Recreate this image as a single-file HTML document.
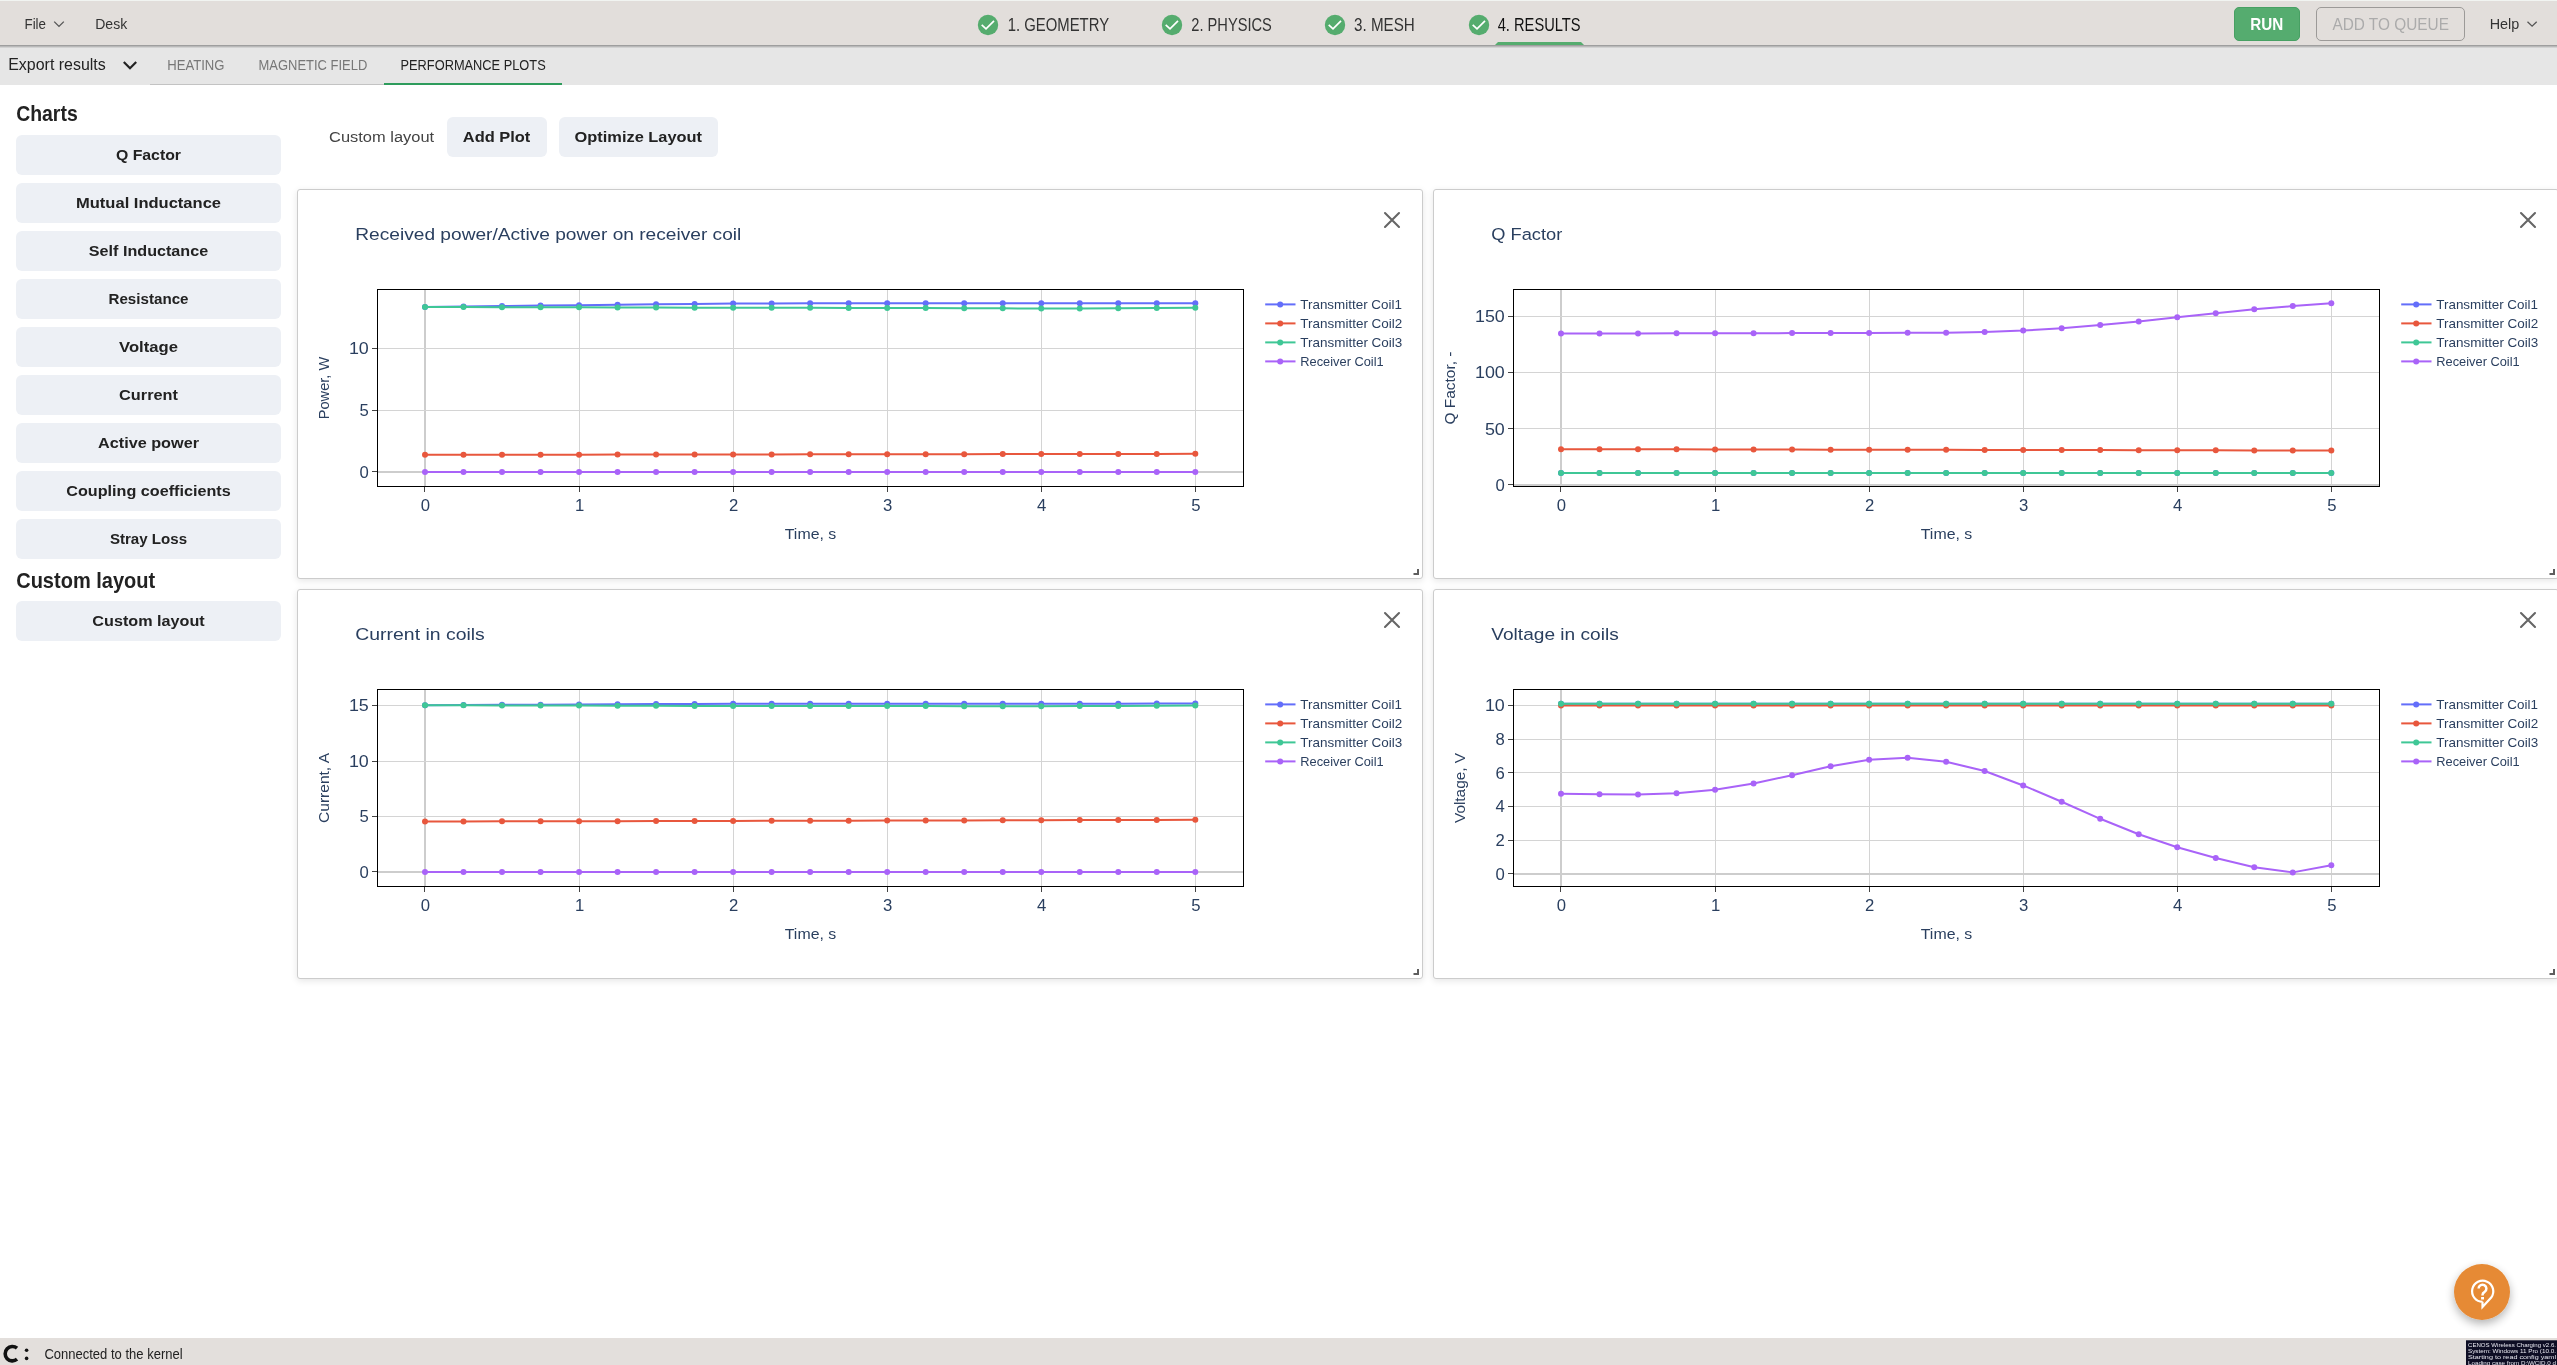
<!DOCTYPE html>
<html><head><meta charset="utf-8"><title>CENOS</title>
<style>
html,body{margin:0;padding:0;width:2557px;height:1365px;overflow:hidden;background:#fff;font-family:"Liberation Sans", sans-serif;}
svg text{font-family:"Liberation Sans", sans-serif;}
svg{will-change:transform;}
</style></head><body>
<div style="position:absolute;left:297px;top:189px;width:1124px;height:388px;border:1px solid #CCCCCC;border-radius:3px;background:#fff;box-shadow:0 2px 7px rgba(0,0,0,0.1)"></div><div style="position:absolute;left:1433px;top:189px;width:1124px;height:388px;border:1px solid #CCCCCC;border-radius:3px;background:#fff;box-shadow:0 2px 7px rgba(0,0,0,0.1)"></div><div style="position:absolute;left:297px;top:589px;width:1124px;height:388px;border:1px solid #CCCCCC;border-radius:3px;background:#fff;box-shadow:0 2px 7px rgba(0,0,0,0.1)"></div><div style="position:absolute;left:1433px;top:589px;width:1124px;height:388px;border:1px solid #CCCCCC;border-radius:3px;background:#fff;box-shadow:0 2px 7px rgba(0,0,0,0.1)"></div>
<svg width="2557" height="1365" viewBox="0 0 2557 1365" style="position:absolute;left:0;top:0;font-family:'Liberation Sans', sans-serif"><defs><filter id="fabsh" x="-50%" y="-50%" width="200%" height="200%"><feGaussianBlur in="SourceAlpha" stdDeviation="5"/><feOffset dy="4"/><feComponentTransfer><feFuncA type="linear" slope="0.3"/></feComponentTransfer><feMerge><feMergeNode/><feMergeNode in="SourceGraphic"/></feMerge></filter></defs><rect x="0" y="0" width="2557" height="45" fill="#E2DEDB"/><rect x="0" y="0" width="2557" height="1" fill="#F1F4F1"/><rect x="0" y="45" width="2557" height="1" fill="#9E9E9E"/><rect x="0" y="46" width="2557" height="1" fill="#B9B9B9"/><rect x="0" y="47" width="2557" height="1" fill="#D2D2D2"/><rect x="0" y="48" width="2557" height="37" fill="#E6E6E6"/><text x="24.50" y="29.30" font-size="15.00" fill="#333" font-weight="normal" text-anchor="start" textLength="21.5" lengthAdjust="spacingAndGlyphs" >File</text><polyline points="54.2,21.6 59,26.4 63.8,21.6" fill="none" stroke="#555" stroke-width="1.3"/><text x="95.20" y="29.30" font-size="15.00" fill="#333" font-weight="normal" text-anchor="start" textLength="32.0" lengthAdjust="spacingAndGlyphs" >Desk</text><circle cx="988.0" cy="25" r="10.2" fill="#55AC6E"/><polyline points="981.7,24.8 986.0,28.8 994.0,20.8" fill="none" stroke="#fff" stroke-width="1.7"/><text x="1007.70" y="31.00" font-size="17.70" fill="#333" font-weight="normal" text-anchor="start" textLength="101.4" lengthAdjust="spacingAndGlyphs" >1. GEOMETRY</text><circle cx="1172.0" cy="25" r="10.2" fill="#55AC6E"/><polyline points="1165.7,24.8 1170.0,28.8 1178.0,20.8" fill="none" stroke="#fff" stroke-width="1.7"/><text x="1191.30" y="31.00" font-size="17.70" fill="#333" font-weight="normal" text-anchor="start" textLength="80.6" lengthAdjust="spacingAndGlyphs" >2. PHYSICS</text><circle cx="1335.0" cy="25" r="10.2" fill="#55AC6E"/><polyline points="1328.7,24.8 1333.0,28.8 1341.0,20.8" fill="none" stroke="#fff" stroke-width="1.7"/><text x="1354.00" y="31.00" font-size="17.70" fill="#333" font-weight="normal" text-anchor="start" textLength="60.8" lengthAdjust="spacingAndGlyphs" >3. MESH</text><circle cx="1479.0" cy="25" r="10.2" fill="#55AC6E"/><polyline points="1472.7,24.8 1477.0,28.8 1485.0,20.8" fill="none" stroke="#fff" stroke-width="1.7"/><text x="1497.70" y="31.00" font-size="17.70" fill="#111" font-weight="normal" text-anchor="start" textLength="82.9" lengthAdjust="spacingAndGlyphs" >4. RESULTS</text><path d="M1495,45 L1498,42 L1581,42 L1584,45 Z" fill="#55AC6E"/><rect x="2234.5" y="7.5" width="65" height="33" rx="4.5" fill="#55AC6F" stroke="#47A063" stroke-width="1"/><text x="2250.30" y="30.00" font-size="17.30" fill="#fff" font-weight="600" text-anchor="start" textLength="33.0" lengthAdjust="spacingAndGlyphs" >RUN</text><rect x="2316.5" y="7.5" width="148" height="33" rx="4.5" fill="none" stroke="#9C9A98" stroke-width="1"/><text x="2332.40" y="30.00" font-size="17.30" fill="#ABABAB" font-weight="normal" text-anchor="start" textLength="116.5" lengthAdjust="spacingAndGlyphs" >ADD TO QUEUE</text><text x="2489.70" y="28.70" font-size="15.00" fill="#333" font-weight="normal" text-anchor="start" textLength="29.6" lengthAdjust="spacingAndGlyphs" >Help</text><polyline points="2527.5,21.8 2532.1,26.2 2536.7,21.8" fill="none" stroke="#555" stroke-width="1.3"/><text x="8.20" y="70.00" font-size="16.60" fill="#222" font-weight="normal" text-anchor="start" textLength="97.6" lengthAdjust="spacingAndGlyphs" >Export results</text><polyline points="123.8,62 130,68.2 136.2,62" fill="none" stroke="#222" stroke-width="2.2"/><text x="167.20" y="70.20" font-size="15.10" fill="#777" font-weight="normal" text-anchor="start" textLength="57.3" lengthAdjust="spacingAndGlyphs" >HEATING</text><text x="258.50" y="70.20" font-size="15.10" fill="#777" font-weight="normal" text-anchor="start" textLength="108.8" lengthAdjust="spacingAndGlyphs" >MAGNETIC FIELD</text><text x="400.50" y="70.20" font-size="15.10" fill="#222" font-weight="normal" text-anchor="start" textLength="145.2" lengthAdjust="spacingAndGlyphs" >PERFORMANCE PLOTS</text><rect x="150" y="84" width="234" height="1" fill="#C3C3C3"/><rect x="384" y="83" width="178" height="2" fill="#2E9C5C"/><text x="16.20" y="121.00" font-size="22.70" fill="#222" font-weight="bold" text-anchor="start" textLength="61.5" lengthAdjust="spacingAndGlyphs" >Charts</text><rect x="16" y="135" width="265" height="40" rx="6" fill="#EDF0F5"/><text x="148.50" y="159.90" font-size="15.30" fill="#222" font-weight="bold" text-anchor="middle" textLength="65.1" lengthAdjust="spacingAndGlyphs" >Q Factor</text><rect x="16" y="183" width="265" height="40" rx="6" fill="#EDF0F5"/><text x="148.50" y="207.90" font-size="15.30" fill="#222" font-weight="bold" text-anchor="middle" textLength="145.0" lengthAdjust="spacingAndGlyphs" >Mutual Inductance</text><rect x="16" y="231" width="265" height="40" rx="6" fill="#EDF0F5"/><text x="148.50" y="255.90" font-size="15.30" fill="#222" font-weight="bold" text-anchor="middle" textLength="119.3" lengthAdjust="spacingAndGlyphs" >Self Inductance</text><rect x="16" y="279" width="265" height="40" rx="6" fill="#EDF0F5"/><text x="148.50" y="303.90" font-size="15.30" fill="#222" font-weight="bold" text-anchor="middle" textLength="80.0" lengthAdjust="spacingAndGlyphs" >Resistance</text><rect x="16" y="327" width="265" height="40" rx="6" fill="#EDF0F5"/><text x="148.50" y="351.90" font-size="15.30" fill="#222" font-weight="bold" text-anchor="middle" textLength="58.8" lengthAdjust="spacingAndGlyphs" >Voltage</text><rect x="16" y="375" width="265" height="40" rx="6" fill="#EDF0F5"/><text x="148.50" y="399.90" font-size="15.30" fill="#222" font-weight="bold" text-anchor="middle" textLength="58.8" lengthAdjust="spacingAndGlyphs" >Current</text><rect x="16" y="423" width="265" height="40" rx="6" fill="#EDF0F5"/><text x="148.50" y="447.90" font-size="15.30" fill="#222" font-weight="bold" text-anchor="middle" textLength="101.0" lengthAdjust="spacingAndGlyphs" >Active power</text><rect x="16" y="471" width="265" height="40" rx="6" fill="#EDF0F5"/><text x="148.50" y="495.90" font-size="15.30" fill="#222" font-weight="bold" text-anchor="middle" textLength="164.4" lengthAdjust="spacingAndGlyphs" >Coupling coefficients</text><rect x="16" y="519" width="265" height="40" rx="6" fill="#EDF0F5"/><text x="148.50" y="543.90" font-size="15.30" fill="#222" font-weight="bold" text-anchor="middle" textLength="77.2" lengthAdjust="spacingAndGlyphs" >Stray Loss</text><text x="16.20" y="587.50" font-size="22.70" fill="#222" font-weight="bold" text-anchor="start" textLength="139.0" lengthAdjust="spacingAndGlyphs" >Custom layout</text><rect x="16" y="601" width="265" height="40" rx="6" fill="#EDF0F5"/><text x="148.50" y="625.90" font-size="15.30" fill="#222" font-weight="bold" text-anchor="middle" textLength="112.3" lengthAdjust="spacingAndGlyphs" >Custom layout</text><text x="329.10" y="142.00" font-size="15.50" fill="#444" font-weight="normal" text-anchor="start" textLength="105.0" lengthAdjust="spacingAndGlyphs" >Custom layout</text><rect x="447" y="117" width="100" height="40" rx="6" fill="#EDF0F5"/><text x="462.80" y="142.00" font-size="15.50" fill="#222" font-weight="bold" text-anchor="start" textLength="67.5" lengthAdjust="spacingAndGlyphs" >Add Plot</text><rect x="559" y="117" width="159" height="40" rx="6" fill="#EDF0F5"/><text x="574.60" y="142.00" font-size="15.50" fill="#222" font-weight="bold" text-anchor="start" textLength="127.5" lengthAdjust="spacingAndGlyphs" >Optimize Layout</text></svg>
<svg width="2557" height="1365" style="position:absolute;left:0;top:0"><text x="355.30" y="240.00" font-size="17.40" fill="#2A3F5F" font-weight="normal" text-anchor="start" textLength="386.0" lengthAdjust="spacingAndGlyphs" >Received power/Active power on receiver coil</text><path d="M1385.0,213.0 L1399.0,227.0 M1399.0,213.0 L1385.0,227.0" stroke="#666" stroke-width="2.1" stroke-linecap="round"/><path d="M1413.5,574.0 H1418.0 V569.0" fill="none" stroke="#5E5E5E" stroke-width="2"/><clipPath id="c297_189"><rect x="378" y="290" width="865" height="196"/></clipPath><rect x="424" y="290" width="2" height="196" fill="#CDCDCD"/><rect x="579" y="290" width="1" height="196" fill="#D4D4D4"/><rect x="733" y="290" width="1" height="196" fill="#D4D4D4"/><rect x="887" y="290" width="1" height="196" fill="#D4D4D4"/><rect x="1041" y="290" width="1" height="196" fill="#D4D4D4"/><rect x="1195" y="290" width="1" height="196" fill="#D4D4D4"/><rect x="378" y="471" width="865" height="2" fill="#CDCDCD"/><rect x="378" y="410" width="865" height="1" fill="#D4D4D4"/><rect x="378" y="348" width="865" height="1" fill="#D4D4D4"/><g clip-path="url(#c297_189)"><polyline points="425.00,306.88 463.51,306.45 502.03,306.02 540.54,305.58 579.06,305.15 617.58,304.75 656.09,304.35 694.61,303.95 733.12,303.55 771.63,303.42 810.15,303.30 848.66,303.30 887.18,303.30 925.69,303.30 964.21,303.30 1002.73,303.30 1041.24,303.30 1079.76,303.30 1118.27,303.30 1156.78,303.30 1195.30,303.30" fill="none" stroke="#636EFA" stroke-width="2" stroke-linejoin="round"/><circle cx="425.00" cy="306.88" r="3" fill="#636EFA"/><circle cx="463.51" cy="306.45" r="3" fill="#636EFA"/><circle cx="502.03" cy="306.02" r="3" fill="#636EFA"/><circle cx="540.54" cy="305.58" r="3" fill="#636EFA"/><circle cx="579.06" cy="305.15" r="3" fill="#636EFA"/><circle cx="617.58" cy="304.75" r="3" fill="#636EFA"/><circle cx="656.09" cy="304.35" r="3" fill="#636EFA"/><circle cx="694.61" cy="303.95" r="3" fill="#636EFA"/><circle cx="733.12" cy="303.55" r="3" fill="#636EFA"/><circle cx="771.63" cy="303.42" r="3" fill="#636EFA"/><circle cx="810.15" cy="303.30" r="3" fill="#636EFA"/><circle cx="848.66" cy="303.30" r="3" fill="#636EFA"/><circle cx="887.18" cy="303.30" r="3" fill="#636EFA"/><circle cx="925.69" cy="303.30" r="3" fill="#636EFA"/><circle cx="964.21" cy="303.30" r="3" fill="#636EFA"/><circle cx="1002.73" cy="303.30" r="3" fill="#636EFA"/><circle cx="1041.24" cy="303.30" r="3" fill="#636EFA"/><circle cx="1079.76" cy="303.30" r="3" fill="#636EFA"/><circle cx="1118.27" cy="303.30" r="3" fill="#636EFA"/><circle cx="1156.78" cy="303.30" r="3" fill="#636EFA"/><circle cx="1195.30" cy="303.30" r="3" fill="#636EFA"/><polyline points="425.00,454.83 463.51,454.78 502.03,454.73 540.54,454.69 579.06,454.64 617.58,454.59 656.09,454.54 694.61,454.49 733.12,454.44 771.63,454.39 810.15,454.34 848.66,454.29 887.18,454.24 925.69,454.19 964.21,454.14 1002.73,454.09 1041.24,454.04 1079.76,453.99 1118.27,453.94 1156.78,453.89 1195.30,453.85" fill="none" stroke="#E8573D" stroke-width="2" stroke-linejoin="round"/><circle cx="425.00" cy="454.83" r="3" fill="#E8573D"/><circle cx="463.51" cy="454.78" r="3" fill="#E8573D"/><circle cx="502.03" cy="454.73" r="3" fill="#E8573D"/><circle cx="540.54" cy="454.69" r="3" fill="#E8573D"/><circle cx="579.06" cy="454.64" r="3" fill="#E8573D"/><circle cx="617.58" cy="454.59" r="3" fill="#E8573D"/><circle cx="656.09" cy="454.54" r="3" fill="#E8573D"/><circle cx="694.61" cy="454.49" r="3" fill="#E8573D"/><circle cx="733.12" cy="454.44" r="3" fill="#E8573D"/><circle cx="771.63" cy="454.39" r="3" fill="#E8573D"/><circle cx="810.15" cy="454.34" r="3" fill="#E8573D"/><circle cx="848.66" cy="454.29" r="3" fill="#E8573D"/><circle cx="887.18" cy="454.24" r="3" fill="#E8573D"/><circle cx="925.69" cy="454.19" r="3" fill="#E8573D"/><circle cx="964.21" cy="454.14" r="3" fill="#E8573D"/><circle cx="1002.73" cy="454.09" r="3" fill="#E8573D"/><circle cx="1041.24" cy="454.04" r="3" fill="#E8573D"/><circle cx="1079.76" cy="453.99" r="3" fill="#E8573D"/><circle cx="1118.27" cy="453.94" r="3" fill="#E8573D"/><circle cx="1156.78" cy="453.89" r="3" fill="#E8573D"/><circle cx="1195.30" cy="453.85" r="3" fill="#E8573D"/><polyline points="425.00,306.88 463.51,307.00 502.03,307.13 540.54,307.25 579.06,307.37 617.58,307.47 656.09,307.56 694.61,307.65 733.12,307.75 771.63,307.81 810.15,307.87 848.66,307.93 887.18,307.99 925.69,308.12 964.21,308.24 1002.73,308.36 1041.24,308.49 1079.76,308.42 1118.27,308.36 1156.78,308.05 1195.30,307.75" fill="none" stroke="#3FC796" stroke-width="2" stroke-linejoin="round"/><circle cx="425.00" cy="306.88" r="3" fill="#3FC796"/><circle cx="463.51" cy="307.00" r="3" fill="#3FC796"/><circle cx="502.03" cy="307.13" r="3" fill="#3FC796"/><circle cx="540.54" cy="307.25" r="3" fill="#3FC796"/><circle cx="579.06" cy="307.37" r="3" fill="#3FC796"/><circle cx="617.58" cy="307.47" r="3" fill="#3FC796"/><circle cx="656.09" cy="307.56" r="3" fill="#3FC796"/><circle cx="694.61" cy="307.65" r="3" fill="#3FC796"/><circle cx="733.12" cy="307.75" r="3" fill="#3FC796"/><circle cx="771.63" cy="307.81" r="3" fill="#3FC796"/><circle cx="810.15" cy="307.87" r="3" fill="#3FC796"/><circle cx="848.66" cy="307.93" r="3" fill="#3FC796"/><circle cx="887.18" cy="307.99" r="3" fill="#3FC796"/><circle cx="925.69" cy="308.12" r="3" fill="#3FC796"/><circle cx="964.21" cy="308.24" r="3" fill="#3FC796"/><circle cx="1002.73" cy="308.36" r="3" fill="#3FC796"/><circle cx="1041.24" cy="308.49" r="3" fill="#3FC796"/><circle cx="1079.76" cy="308.42" r="3" fill="#3FC796"/><circle cx="1118.27" cy="308.36" r="3" fill="#3FC796"/><circle cx="1156.78" cy="308.05" r="3" fill="#3FC796"/><circle cx="1195.30" cy="307.75" r="3" fill="#3FC796"/><polyline points="425.00,472.00 463.51,472.00 502.03,472.00 540.54,472.00 579.06,472.00 617.58,472.00 656.09,472.00 694.61,472.00 733.12,472.00 771.63,472.00 810.15,472.00 848.66,472.00 887.18,472.00 925.69,472.00 964.21,472.00 1002.73,472.00 1041.24,472.00 1079.76,472.00 1118.27,472.00 1156.78,472.00 1195.30,472.00" fill="none" stroke="#A963F8" stroke-width="2" stroke-linejoin="round"/><circle cx="425.00" cy="472.00" r="3" fill="#A963F8"/><circle cx="463.51" cy="472.00" r="3" fill="#A963F8"/><circle cx="502.03" cy="472.00" r="3" fill="#A963F8"/><circle cx="540.54" cy="472.00" r="3" fill="#A963F8"/><circle cx="579.06" cy="472.00" r="3" fill="#A963F8"/><circle cx="617.58" cy="472.00" r="3" fill="#A963F8"/><circle cx="656.09" cy="472.00" r="3" fill="#A963F8"/><circle cx="694.61" cy="472.00" r="3" fill="#A963F8"/><circle cx="733.12" cy="472.00" r="3" fill="#A963F8"/><circle cx="771.63" cy="472.00" r="3" fill="#A963F8"/><circle cx="810.15" cy="472.00" r="3" fill="#A963F8"/><circle cx="848.66" cy="472.00" r="3" fill="#A963F8"/><circle cx="887.18" cy="472.00" r="3" fill="#A963F8"/><circle cx="925.69" cy="472.00" r="3" fill="#A963F8"/><circle cx="964.21" cy="472.00" r="3" fill="#A963F8"/><circle cx="1002.73" cy="472.00" r="3" fill="#A963F8"/><circle cx="1041.24" cy="472.00" r="3" fill="#A963F8"/><circle cx="1079.76" cy="472.00" r="3" fill="#A963F8"/><circle cx="1118.27" cy="472.00" r="3" fill="#A963F8"/><circle cx="1156.78" cy="472.00" r="3" fill="#A963F8"/><circle cx="1195.30" cy="472.00" r="3" fill="#A963F8"/></g><rect x="377" y="289" width="867" height="1" fill="#000"/><rect x="377" y="486" width="867" height="1" fill="#000"/><rect x="377" y="289" width="1" height="198" fill="#000"/><rect x="1243" y="289" width="1" height="198" fill="#000"/><rect x="424" y="487" width="1" height="5" fill="#444"/><text x="425.50" y="510.60" font-size="16.70" fill="#2A3F5F" font-weight="normal" text-anchor="middle" >0</text><rect x="579" y="487" width="1" height="5" fill="#444"/><text x="579.56" y="510.60" font-size="16.70" fill="#2A3F5F" font-weight="normal" text-anchor="middle" >1</text><rect x="733" y="487" width="1" height="5" fill="#444"/><text x="733.62" y="510.60" font-size="16.70" fill="#2A3F5F" font-weight="normal" text-anchor="middle" >2</text><rect x="887" y="487" width="1" height="5" fill="#444"/><text x="887.68" y="510.60" font-size="16.70" fill="#2A3F5F" font-weight="normal" text-anchor="middle" >3</text><rect x="1041" y="487" width="1" height="5" fill="#444"/><text x="1041.74" y="510.60" font-size="16.70" fill="#2A3F5F" font-weight="normal" text-anchor="middle" >4</text><rect x="1195" y="487" width="1" height="5" fill="#444"/><text x="1195.80" y="510.60" font-size="16.70" fill="#2A3F5F" font-weight="normal" text-anchor="middle" >5</text><rect x="372" y="471" width="5" height="1" fill="#444"/><text x="368.80" y="477.80" font-size="16.70" fill="#2A3F5F" font-weight="normal" text-anchor="end" >0</text><rect x="372" y="410" width="5" height="1" fill="#444"/><text x="368.80" y="416.05" font-size="16.70" fill="#2A3F5F" font-weight="normal" text-anchor="end" >5</text><rect x="372" y="348" width="5" height="1" fill="#444"/><text x="368.80" y="354.30" font-size="16.70" fill="#2A3F5F" font-weight="normal" text-anchor="end" textLength="19.9" lengthAdjust="spacingAndGlyphs" >10</text><text x="810.50" y="538.80" font-size="14.50" fill="#2A3F5F" font-weight="normal" text-anchor="middle" textLength="51.5" lengthAdjust="spacingAndGlyphs" >Time, s</text><text x="0" y="0" font-size="14.5" fill="#2A3F5F" text-anchor="middle" textLength="62.5" lengthAdjust="spacingAndGlyphs" transform="translate(329.2,388.0) rotate(-90)">Power, W</text><rect x="1265.2" y="303.40" width="30.3" height="2" fill="#636EFA"/><circle cx="1280.2" cy="304.40" r="3" fill="#636EFA"/><text x="1300.30" y="308.90" font-size="13.00" fill="#2A3F5F" font-weight="normal" text-anchor="start" textLength="101.6" lengthAdjust="spacingAndGlyphs" >Transmitter Coil1</text><rect x="1265.2" y="322.40" width="30.3" height="2" fill="#E8573D"/><circle cx="1280.2" cy="323.40" r="3" fill="#E8573D"/><text x="1300.30" y="327.90" font-size="13.00" fill="#2A3F5F" font-weight="normal" text-anchor="start" textLength="102.0" lengthAdjust="spacingAndGlyphs" >Transmitter Coil2</text><rect x="1265.2" y="341.40" width="30.3" height="2" fill="#3FC796"/><circle cx="1280.2" cy="342.40" r="3" fill="#3FC796"/><text x="1300.30" y="346.90" font-size="13.00" fill="#2A3F5F" font-weight="normal" text-anchor="start" textLength="102.0" lengthAdjust="spacingAndGlyphs" >Transmitter Coil3</text><rect x="1265.2" y="360.40" width="30.3" height="2" fill="#A963F8"/><circle cx="1280.2" cy="361.40" r="3" fill="#A963F8"/><text x="1300.30" y="365.90" font-size="13.00" fill="#2A3F5F" font-weight="normal" text-anchor="start" textLength="83.4" lengthAdjust="spacingAndGlyphs" >Receiver Coil1</text><text x="1491.30" y="240.00" font-size="17.40" fill="#2A3F5F" font-weight="normal" text-anchor="start" textLength="71.0" lengthAdjust="spacingAndGlyphs" >Q Factor</text><path d="M2521.0,213.0 L2535.0,227.0 M2535.0,213.0 L2521.0,227.0" stroke="#666" stroke-width="2.1" stroke-linecap="round"/><path d="M2549.5,574.0 H2554.0 V569.0" fill="none" stroke="#5E5E5E" stroke-width="2"/><clipPath id="c1433_189"><rect x="1514" y="290" width="865" height="196"/></clipPath><rect x="1560" y="290" width="2" height="196" fill="#CDCDCD"/><rect x="1715" y="290" width="1" height="196" fill="#D4D4D4"/><rect x="1869" y="290" width="1" height="196" fill="#D4D4D4"/><rect x="2023" y="290" width="1" height="196" fill="#D4D4D4"/><rect x="2177" y="290" width="1" height="196" fill="#D4D4D4"/><rect x="2331" y="290" width="1" height="196" fill="#D4D4D4"/><rect x="1514" y="484" width="865" height="2" fill="#CDCDCD"/><rect x="1514" y="428" width="865" height="1" fill="#D4D4D4"/><rect x="1514" y="372" width="865" height="1" fill="#D4D4D4"/><rect x="1514" y="316" width="865" height="1" fill="#D4D4D4"/><g clip-path="url(#c1433_189)"><polyline points="1561.00,472.98 1599.52,472.98 1638.03,472.98 1676.55,472.98 1715.06,472.98 1753.58,472.98 1792.09,472.98 1830.61,472.98 1869.12,472.98 1907.63,472.98 1946.15,472.98 1984.66,472.98 2023.18,472.98 2061.70,472.98 2100.21,472.98 2138.72,472.98 2177.24,472.98 2215.76,472.98 2254.27,472.98 2292.78,472.98 2331.30,472.98" fill="none" stroke="#636EFA" stroke-width="2" stroke-linejoin="round"/><circle cx="1561.00" cy="472.98" r="3" fill="#636EFA"/><circle cx="1599.52" cy="472.98" r="3" fill="#636EFA"/><circle cx="1638.03" cy="472.98" r="3" fill="#636EFA"/><circle cx="1676.55" cy="472.98" r="3" fill="#636EFA"/><circle cx="1715.06" cy="472.98" r="3" fill="#636EFA"/><circle cx="1753.58" cy="472.98" r="3" fill="#636EFA"/><circle cx="1792.09" cy="472.98" r="3" fill="#636EFA"/><circle cx="1830.61" cy="472.98" r="3" fill="#636EFA"/><circle cx="1869.12" cy="472.98" r="3" fill="#636EFA"/><circle cx="1907.63" cy="472.98" r="3" fill="#636EFA"/><circle cx="1946.15" cy="472.98" r="3" fill="#636EFA"/><circle cx="1984.66" cy="472.98" r="3" fill="#636EFA"/><circle cx="2023.18" cy="472.98" r="3" fill="#636EFA"/><circle cx="2061.70" cy="472.98" r="3" fill="#636EFA"/><circle cx="2100.21" cy="472.98" r="3" fill="#636EFA"/><circle cx="2138.72" cy="472.98" r="3" fill="#636EFA"/><circle cx="2177.24" cy="472.98" r="3" fill="#636EFA"/><circle cx="2215.76" cy="472.98" r="3" fill="#636EFA"/><circle cx="2254.27" cy="472.98" r="3" fill="#636EFA"/><circle cx="2292.78" cy="472.98" r="3" fill="#636EFA"/><circle cx="2331.30" cy="472.98" r="3" fill="#636EFA"/><polyline points="1561.00,449.17 1599.52,449.23 1638.03,449.30 1676.55,449.37 1715.06,449.44 1753.58,449.50 1792.09,449.57 1830.61,449.64 1869.12,449.71 1907.63,449.77 1946.15,449.84 1984.66,449.91 2023.18,449.98 2061.70,450.04 2100.21,450.11 2138.72,450.18 2177.24,450.25 2215.76,450.31 2254.27,450.38 2292.78,450.45 2331.30,450.51" fill="none" stroke="#E8573D" stroke-width="2" stroke-linejoin="round"/><circle cx="1561.00" cy="449.17" r="3" fill="#E8573D"/><circle cx="1599.52" cy="449.23" r="3" fill="#E8573D"/><circle cx="1638.03" cy="449.30" r="3" fill="#E8573D"/><circle cx="1676.55" cy="449.37" r="3" fill="#E8573D"/><circle cx="1715.06" cy="449.44" r="3" fill="#E8573D"/><circle cx="1753.58" cy="449.50" r="3" fill="#E8573D"/><circle cx="1792.09" cy="449.57" r="3" fill="#E8573D"/><circle cx="1830.61" cy="449.64" r="3" fill="#E8573D"/><circle cx="1869.12" cy="449.71" r="3" fill="#E8573D"/><circle cx="1907.63" cy="449.77" r="3" fill="#E8573D"/><circle cx="1946.15" cy="449.84" r="3" fill="#E8573D"/><circle cx="1984.66" cy="449.91" r="3" fill="#E8573D"/><circle cx="2023.18" cy="449.98" r="3" fill="#E8573D"/><circle cx="2061.70" cy="450.04" r="3" fill="#E8573D"/><circle cx="2100.21" cy="450.11" r="3" fill="#E8573D"/><circle cx="2138.72" cy="450.18" r="3" fill="#E8573D"/><circle cx="2177.24" cy="450.25" r="3" fill="#E8573D"/><circle cx="2215.76" cy="450.31" r="3" fill="#E8573D"/><circle cx="2254.27" cy="450.38" r="3" fill="#E8573D"/><circle cx="2292.78" cy="450.45" r="3" fill="#E8573D"/><circle cx="2331.30" cy="450.51" r="3" fill="#E8573D"/><polyline points="1561.00,472.98 1599.52,472.98 1638.03,472.98 1676.55,472.98 1715.06,472.98 1753.58,472.98 1792.09,472.98 1830.61,472.98 1869.12,472.98 1907.63,472.98 1946.15,472.98 1984.66,472.98 2023.18,472.98 2061.70,472.98 2100.21,472.98 2138.72,472.98 2177.24,472.98 2215.76,472.98 2254.27,472.98 2292.78,472.98 2331.30,472.98" fill="none" stroke="#3FC796" stroke-width="2" stroke-linejoin="round"/><circle cx="1561.00" cy="472.98" r="3" fill="#3FC796"/><circle cx="1599.52" cy="472.98" r="3" fill="#3FC796"/><circle cx="1638.03" cy="472.98" r="3" fill="#3FC796"/><circle cx="1676.55" cy="472.98" r="3" fill="#3FC796"/><circle cx="1715.06" cy="472.98" r="3" fill="#3FC796"/><circle cx="1753.58" cy="472.98" r="3" fill="#3FC796"/><circle cx="1792.09" cy="472.98" r="3" fill="#3FC796"/><circle cx="1830.61" cy="472.98" r="3" fill="#3FC796"/><circle cx="1869.12" cy="472.98" r="3" fill="#3FC796"/><circle cx="1907.63" cy="472.98" r="3" fill="#3FC796"/><circle cx="1946.15" cy="472.98" r="3" fill="#3FC796"/><circle cx="1984.66" cy="472.98" r="3" fill="#3FC796"/><circle cx="2023.18" cy="472.98" r="3" fill="#3FC796"/><circle cx="2061.70" cy="472.98" r="3" fill="#3FC796"/><circle cx="2100.21" cy="472.98" r="3" fill="#3FC796"/><circle cx="2138.72" cy="472.98" r="3" fill="#3FC796"/><circle cx="2177.24" cy="472.98" r="3" fill="#3FC796"/><circle cx="2215.76" cy="472.98" r="3" fill="#3FC796"/><circle cx="2254.27" cy="472.98" r="3" fill="#3FC796"/><circle cx="2292.78" cy="472.98" r="3" fill="#3FC796"/><circle cx="2331.30" cy="472.98" r="3" fill="#3FC796"/><polyline points="1561.00,333.58 1599.52,333.50 1638.03,333.42 1676.55,333.34 1715.06,333.26 1753.58,333.19 1792.09,333.11 1830.61,333.03 1869.12,332.95 1907.63,332.87 1946.15,332.79 1984.66,331.89 2023.18,330.55 2061.70,328.19 2100.21,325.04 2138.72,321.45 2177.24,317.29 2215.76,313.25 2254.27,309.32 2292.78,306.06 2331.30,303.14" fill="none" stroke="#A963F8" stroke-width="2" stroke-linejoin="round"/><circle cx="1561.00" cy="333.58" r="3" fill="#A963F8"/><circle cx="1599.52" cy="333.50" r="3" fill="#A963F8"/><circle cx="1638.03" cy="333.42" r="3" fill="#A963F8"/><circle cx="1676.55" cy="333.34" r="3" fill="#A963F8"/><circle cx="1715.06" cy="333.26" r="3" fill="#A963F8"/><circle cx="1753.58" cy="333.19" r="3" fill="#A963F8"/><circle cx="1792.09" cy="333.11" r="3" fill="#A963F8"/><circle cx="1830.61" cy="333.03" r="3" fill="#A963F8"/><circle cx="1869.12" cy="332.95" r="3" fill="#A963F8"/><circle cx="1907.63" cy="332.87" r="3" fill="#A963F8"/><circle cx="1946.15" cy="332.79" r="3" fill="#A963F8"/><circle cx="1984.66" cy="331.89" r="3" fill="#A963F8"/><circle cx="2023.18" cy="330.55" r="3" fill="#A963F8"/><circle cx="2061.70" cy="328.19" r="3" fill="#A963F8"/><circle cx="2100.21" cy="325.04" r="3" fill="#A963F8"/><circle cx="2138.72" cy="321.45" r="3" fill="#A963F8"/><circle cx="2177.24" cy="317.29" r="3" fill="#A963F8"/><circle cx="2215.76" cy="313.25" r="3" fill="#A963F8"/><circle cx="2254.27" cy="309.32" r="3" fill="#A963F8"/><circle cx="2292.78" cy="306.06" r="3" fill="#A963F8"/><circle cx="2331.30" cy="303.14" r="3" fill="#A963F8"/></g><rect x="1513" y="289" width="867" height="1" fill="#000"/><rect x="1513" y="486" width="867" height="1" fill="#000"/><rect x="1513" y="289" width="1" height="198" fill="#000"/><rect x="2379" y="289" width="1" height="198" fill="#000"/><rect x="1560" y="487" width="1" height="5" fill="#444"/><text x="1561.50" y="510.60" font-size="16.70" fill="#2A3F5F" font-weight="normal" text-anchor="middle" >0</text><rect x="1715" y="487" width="1" height="5" fill="#444"/><text x="1715.56" y="510.60" font-size="16.70" fill="#2A3F5F" font-weight="normal" text-anchor="middle" >1</text><rect x="1869" y="487" width="1" height="5" fill="#444"/><text x="1869.62" y="510.60" font-size="16.70" fill="#2A3F5F" font-weight="normal" text-anchor="middle" >2</text><rect x="2023" y="487" width="1" height="5" fill="#444"/><text x="2023.68" y="510.60" font-size="16.70" fill="#2A3F5F" font-weight="normal" text-anchor="middle" >3</text><rect x="2177" y="487" width="1" height="5" fill="#444"/><text x="2177.74" y="510.60" font-size="16.70" fill="#2A3F5F" font-weight="normal" text-anchor="middle" >4</text><rect x="2331" y="487" width="1" height="5" fill="#444"/><text x="2331.80" y="510.60" font-size="16.70" fill="#2A3F5F" font-weight="normal" text-anchor="middle" >5</text><rect x="1508" y="484" width="5" height="1" fill="#444"/><text x="1504.80" y="490.80" font-size="16.70" fill="#2A3F5F" font-weight="normal" text-anchor="end" >0</text><rect x="1508" y="428" width="5" height="1" fill="#444"/><text x="1504.80" y="434.63" font-size="16.70" fill="#2A3F5F" font-weight="normal" text-anchor="end" textLength="19.9" lengthAdjust="spacingAndGlyphs" >50</text><rect x="1508" y="372" width="5" height="1" fill="#444"/><text x="1504.80" y="378.47" font-size="16.70" fill="#2A3F5F" font-weight="normal" text-anchor="end" textLength="29.8" lengthAdjust="spacingAndGlyphs" >100</text><rect x="1508" y="316" width="5" height="1" fill="#444"/><text x="1504.80" y="322.31" font-size="16.70" fill="#2A3F5F" font-weight="normal" text-anchor="end" textLength="29.8" lengthAdjust="spacingAndGlyphs" >150</text><text x="1946.50" y="538.80" font-size="14.50" fill="#2A3F5F" font-weight="normal" text-anchor="middle" textLength="51.5" lengthAdjust="spacingAndGlyphs" >Time, s</text><text x="0" y="0" font-size="14.5" fill="#2A3F5F" text-anchor="middle" textLength="73.0" lengthAdjust="spacingAndGlyphs" transform="translate(1454.9,388.0) rotate(-90)">Q Factor, -</text><rect x="2401.2" y="303.40" width="30.3" height="2" fill="#636EFA"/><circle cx="2416.2" cy="304.40" r="3" fill="#636EFA"/><text x="2436.30" y="308.90" font-size="13.00" fill="#2A3F5F" font-weight="normal" text-anchor="start" textLength="101.6" lengthAdjust="spacingAndGlyphs" >Transmitter Coil1</text><rect x="2401.2" y="322.40" width="30.3" height="2" fill="#E8573D"/><circle cx="2416.2" cy="323.40" r="3" fill="#E8573D"/><text x="2436.30" y="327.90" font-size="13.00" fill="#2A3F5F" font-weight="normal" text-anchor="start" textLength="102.0" lengthAdjust="spacingAndGlyphs" >Transmitter Coil2</text><rect x="2401.2" y="341.40" width="30.3" height="2" fill="#3FC796"/><circle cx="2416.2" cy="342.40" r="3" fill="#3FC796"/><text x="2436.30" y="346.90" font-size="13.00" fill="#2A3F5F" font-weight="normal" text-anchor="start" textLength="102.0" lengthAdjust="spacingAndGlyphs" >Transmitter Coil3</text><rect x="2401.2" y="360.40" width="30.3" height="2" fill="#A963F8"/><circle cx="2416.2" cy="361.40" r="3" fill="#A963F8"/><text x="2436.30" y="365.90" font-size="13.00" fill="#2A3F5F" font-weight="normal" text-anchor="start" textLength="83.4" lengthAdjust="spacingAndGlyphs" >Receiver Coil1</text><text x="355.30" y="640.00" font-size="17.40" fill="#2A3F5F" font-weight="normal" text-anchor="start" textLength="129.5" lengthAdjust="spacingAndGlyphs" >Current in coils</text><path d="M1385.0,613.0 L1399.0,627.0 M1399.0,613.0 L1385.0,627.0" stroke="#666" stroke-width="2.1" stroke-linecap="round"/><path d="M1413.5,974.0 H1418.0 V969.0" fill="none" stroke="#5E5E5E" stroke-width="2"/><clipPath id="c297_589"><rect x="378" y="690" width="865" height="196"/></clipPath><rect x="424" y="690" width="2" height="196" fill="#CDCDCD"/><rect x="579" y="690" width="1" height="196" fill="#D4D4D4"/><rect x="733" y="690" width="1" height="196" fill="#D4D4D4"/><rect x="887" y="690" width="1" height="196" fill="#D4D4D4"/><rect x="1041" y="690" width="1" height="196" fill="#D4D4D4"/><rect x="1195" y="690" width="1" height="196" fill="#D4D4D4"/><rect x="378" y="871" width="865" height="2" fill="#CDCDCD"/><rect x="378" y="816" width="865" height="1" fill="#D4D4D4"/><rect x="378" y="761" width="865" height="1" fill="#D4D4D4"/><rect x="378" y="705" width="865" height="1" fill="#D4D4D4"/><g clip-path="url(#c297_589)"><polyline points="425.00,705.17 463.51,704.99 502.03,704.81 540.54,704.63 579.06,704.45 617.58,704.27 656.09,704.08 694.61,703.90 733.12,703.72 771.63,703.71 810.15,703.71 848.66,703.70 887.18,703.69 925.69,703.68 964.21,703.67 1002.73,703.66 1041.24,703.65 1079.76,703.64 1118.27,703.63 1156.78,703.62 1195.30,703.61" fill="none" stroke="#636EFA" stroke-width="2" stroke-linejoin="round"/><circle cx="425.00" cy="705.17" r="3" fill="#636EFA"/><circle cx="463.51" cy="704.99" r="3" fill="#636EFA"/><circle cx="502.03" cy="704.81" r="3" fill="#636EFA"/><circle cx="540.54" cy="704.63" r="3" fill="#636EFA"/><circle cx="579.06" cy="704.45" r="3" fill="#636EFA"/><circle cx="617.58" cy="704.27" r="3" fill="#636EFA"/><circle cx="656.09" cy="704.08" r="3" fill="#636EFA"/><circle cx="694.61" cy="703.90" r="3" fill="#636EFA"/><circle cx="733.12" cy="703.72" r="3" fill="#636EFA"/><circle cx="771.63" cy="703.71" r="3" fill="#636EFA"/><circle cx="810.15" cy="703.71" r="3" fill="#636EFA"/><circle cx="848.66" cy="703.70" r="3" fill="#636EFA"/><circle cx="887.18" cy="703.69" r="3" fill="#636EFA"/><circle cx="925.69" cy="703.68" r="3" fill="#636EFA"/><circle cx="964.21" cy="703.67" r="3" fill="#636EFA"/><circle cx="1002.73" cy="703.66" r="3" fill="#636EFA"/><circle cx="1041.24" cy="703.65" r="3" fill="#636EFA"/><circle cx="1079.76" cy="703.64" r="3" fill="#636EFA"/><circle cx="1118.27" cy="703.63" r="3" fill="#636EFA"/><circle cx="1156.78" cy="703.62" r="3" fill="#636EFA"/><circle cx="1195.30" cy="703.61" r="3" fill="#636EFA"/><polyline points="425.00,821.50 463.51,821.43 502.03,821.36 540.54,821.29 579.06,821.22 617.58,821.15 656.09,821.08 694.61,821.01 733.12,820.94 771.63,820.85 810.15,820.75 848.66,820.66 887.18,820.57 925.69,820.48 964.21,820.38 1002.73,820.29 1041.24,820.20 1079.76,820.11 1118.27,820.01 1156.78,819.92 1195.30,819.83" fill="none" stroke="#E8573D" stroke-width="2" stroke-linejoin="round"/><circle cx="425.00" cy="821.50" r="3" fill="#E8573D"/><circle cx="463.51" cy="821.43" r="3" fill="#E8573D"/><circle cx="502.03" cy="821.36" r="3" fill="#E8573D"/><circle cx="540.54" cy="821.29" r="3" fill="#E8573D"/><circle cx="579.06" cy="821.22" r="3" fill="#E8573D"/><circle cx="617.58" cy="821.15" r="3" fill="#E8573D"/><circle cx="656.09" cy="821.08" r="3" fill="#E8573D"/><circle cx="694.61" cy="821.01" r="3" fill="#E8573D"/><circle cx="733.12" cy="820.94" r="3" fill="#E8573D"/><circle cx="771.63" cy="820.85" r="3" fill="#E8573D"/><circle cx="810.15" cy="820.75" r="3" fill="#E8573D"/><circle cx="848.66" cy="820.66" r="3" fill="#E8573D"/><circle cx="887.18" cy="820.57" r="3" fill="#E8573D"/><circle cx="925.69" cy="820.48" r="3" fill="#E8573D"/><circle cx="964.21" cy="820.38" r="3" fill="#E8573D"/><circle cx="1002.73" cy="820.29" r="3" fill="#E8573D"/><circle cx="1041.24" cy="820.20" r="3" fill="#E8573D"/><circle cx="1079.76" cy="820.11" r="3" fill="#E8573D"/><circle cx="1118.27" cy="820.01" r="3" fill="#E8573D"/><circle cx="1156.78" cy="819.92" r="3" fill="#E8573D"/><circle cx="1195.30" cy="819.83" r="3" fill="#E8573D"/><polyline points="425.00,705.17 463.51,705.28 502.03,705.39 540.54,705.50 579.06,705.61 617.58,705.72 656.09,705.83 694.61,705.94 733.12,706.06 771.63,706.07 810.15,706.08 848.66,706.10 887.18,706.11 925.69,706.12 964.21,706.14 1002.73,706.15 1041.24,706.17 1079.76,706.03 1118.27,705.89 1156.78,705.75 1195.30,705.61" fill="none" stroke="#3FC796" stroke-width="2" stroke-linejoin="round"/><circle cx="425.00" cy="705.17" r="3" fill="#3FC796"/><circle cx="463.51" cy="705.28" r="3" fill="#3FC796"/><circle cx="502.03" cy="705.39" r="3" fill="#3FC796"/><circle cx="540.54" cy="705.50" r="3" fill="#3FC796"/><circle cx="579.06" cy="705.61" r="3" fill="#3FC796"/><circle cx="617.58" cy="705.72" r="3" fill="#3FC796"/><circle cx="656.09" cy="705.83" r="3" fill="#3FC796"/><circle cx="694.61" cy="705.94" r="3" fill="#3FC796"/><circle cx="733.12" cy="706.06" r="3" fill="#3FC796"/><circle cx="771.63" cy="706.07" r="3" fill="#3FC796"/><circle cx="810.15" cy="706.08" r="3" fill="#3FC796"/><circle cx="848.66" cy="706.10" r="3" fill="#3FC796"/><circle cx="887.18" cy="706.11" r="3" fill="#3FC796"/><circle cx="925.69" cy="706.12" r="3" fill="#3FC796"/><circle cx="964.21" cy="706.14" r="3" fill="#3FC796"/><circle cx="1002.73" cy="706.15" r="3" fill="#3FC796"/><circle cx="1041.24" cy="706.17" r="3" fill="#3FC796"/><circle cx="1079.76" cy="706.03" r="3" fill="#3FC796"/><circle cx="1118.27" cy="705.89" r="3" fill="#3FC796"/><circle cx="1156.78" cy="705.75" r="3" fill="#3FC796"/><circle cx="1195.30" cy="705.61" r="3" fill="#3FC796"/><polyline points="425.00,872.00 463.51,872.00 502.03,872.00 540.54,872.00 579.06,872.00 617.58,872.00 656.09,872.00 694.61,872.00 733.12,872.00 771.63,872.00 810.15,872.00 848.66,872.00 887.18,872.00 925.69,872.00 964.21,872.00 1002.73,872.00 1041.24,872.00 1079.76,872.00 1118.27,872.00 1156.78,872.00 1195.30,872.00" fill="none" stroke="#A963F8" stroke-width="2" stroke-linejoin="round"/><circle cx="425.00" cy="872.00" r="3" fill="#A963F8"/><circle cx="463.51" cy="872.00" r="3" fill="#A963F8"/><circle cx="502.03" cy="872.00" r="3" fill="#A963F8"/><circle cx="540.54" cy="872.00" r="3" fill="#A963F8"/><circle cx="579.06" cy="872.00" r="3" fill="#A963F8"/><circle cx="617.58" cy="872.00" r="3" fill="#A963F8"/><circle cx="656.09" cy="872.00" r="3" fill="#A963F8"/><circle cx="694.61" cy="872.00" r="3" fill="#A963F8"/><circle cx="733.12" cy="872.00" r="3" fill="#A963F8"/><circle cx="771.63" cy="872.00" r="3" fill="#A963F8"/><circle cx="810.15" cy="872.00" r="3" fill="#A963F8"/><circle cx="848.66" cy="872.00" r="3" fill="#A963F8"/><circle cx="887.18" cy="872.00" r="3" fill="#A963F8"/><circle cx="925.69" cy="872.00" r="3" fill="#A963F8"/><circle cx="964.21" cy="872.00" r="3" fill="#A963F8"/><circle cx="1002.73" cy="872.00" r="3" fill="#A963F8"/><circle cx="1041.24" cy="872.00" r="3" fill="#A963F8"/><circle cx="1079.76" cy="872.00" r="3" fill="#A963F8"/><circle cx="1118.27" cy="872.00" r="3" fill="#A963F8"/><circle cx="1156.78" cy="872.00" r="3" fill="#A963F8"/><circle cx="1195.30" cy="872.00" r="3" fill="#A963F8"/></g><rect x="377" y="689" width="867" height="1" fill="#000"/><rect x="377" y="886" width="867" height="1" fill="#000"/><rect x="377" y="689" width="1" height="198" fill="#000"/><rect x="1243" y="689" width="1" height="198" fill="#000"/><rect x="424" y="887" width="1" height="5" fill="#444"/><text x="425.50" y="910.60" font-size="16.70" fill="#2A3F5F" font-weight="normal" text-anchor="middle" >0</text><rect x="579" y="887" width="1" height="5" fill="#444"/><text x="579.56" y="910.60" font-size="16.70" fill="#2A3F5F" font-weight="normal" text-anchor="middle" >1</text><rect x="733" y="887" width="1" height="5" fill="#444"/><text x="733.62" y="910.60" font-size="16.70" fill="#2A3F5F" font-weight="normal" text-anchor="middle" >2</text><rect x="887" y="887" width="1" height="5" fill="#444"/><text x="887.68" y="910.60" font-size="16.70" fill="#2A3F5F" font-weight="normal" text-anchor="middle" >3</text><rect x="1041" y="887" width="1" height="5" fill="#444"/><text x="1041.74" y="910.60" font-size="16.70" fill="#2A3F5F" font-weight="normal" text-anchor="middle" >4</text><rect x="1195" y="887" width="1" height="5" fill="#444"/><text x="1195.80" y="910.60" font-size="16.70" fill="#2A3F5F" font-weight="normal" text-anchor="middle" >5</text><rect x="372" y="871" width="5" height="1" fill="#444"/><text x="368.80" y="877.80" font-size="16.70" fill="#2A3F5F" font-weight="normal" text-anchor="end" >0</text><rect x="372" y="816" width="5" height="1" fill="#444"/><text x="368.80" y="822.30" font-size="16.70" fill="#2A3F5F" font-weight="normal" text-anchor="end" >5</text><rect x="372" y="761" width="5" height="1" fill="#444"/><text x="368.80" y="766.80" font-size="16.70" fill="#2A3F5F" font-weight="normal" text-anchor="end" textLength="19.9" lengthAdjust="spacingAndGlyphs" >10</text><rect x="372" y="705" width="5" height="1" fill="#444"/><text x="368.80" y="711.30" font-size="16.70" fill="#2A3F5F" font-weight="normal" text-anchor="end" textLength="19.9" lengthAdjust="spacingAndGlyphs" >15</text><text x="810.50" y="938.80" font-size="14.50" fill="#2A3F5F" font-weight="normal" text-anchor="middle" textLength="51.5" lengthAdjust="spacingAndGlyphs" >Time, s</text><text x="0" y="0" font-size="14.5" fill="#2A3F5F" text-anchor="middle" textLength="70.0" lengthAdjust="spacingAndGlyphs" transform="translate(329.2,788.0) rotate(-90)">Current, A</text><rect x="1265.2" y="703.40" width="30.3" height="2" fill="#636EFA"/><circle cx="1280.2" cy="704.40" r="3" fill="#636EFA"/><text x="1300.30" y="708.90" font-size="13.00" fill="#2A3F5F" font-weight="normal" text-anchor="start" textLength="101.6" lengthAdjust="spacingAndGlyphs" >Transmitter Coil1</text><rect x="1265.2" y="722.40" width="30.3" height="2" fill="#E8573D"/><circle cx="1280.2" cy="723.40" r="3" fill="#E8573D"/><text x="1300.30" y="727.90" font-size="13.00" fill="#2A3F5F" font-weight="normal" text-anchor="start" textLength="102.0" lengthAdjust="spacingAndGlyphs" >Transmitter Coil2</text><rect x="1265.2" y="741.40" width="30.3" height="2" fill="#3FC796"/><circle cx="1280.2" cy="742.40" r="3" fill="#3FC796"/><text x="1300.30" y="746.90" font-size="13.00" fill="#2A3F5F" font-weight="normal" text-anchor="start" textLength="102.0" lengthAdjust="spacingAndGlyphs" >Transmitter Coil3</text><rect x="1265.2" y="760.40" width="30.3" height="2" fill="#A963F8"/><circle cx="1280.2" cy="761.40" r="3" fill="#A963F8"/><text x="1300.30" y="765.90" font-size="13.00" fill="#2A3F5F" font-weight="normal" text-anchor="start" textLength="83.4" lengthAdjust="spacingAndGlyphs" >Receiver Coil1</text><text x="1491.30" y="640.00" font-size="17.40" fill="#2A3F5F" font-weight="normal" text-anchor="start" textLength="127.5" lengthAdjust="spacingAndGlyphs" >Voltage in coils</text><path d="M2521.0,613.0 L2535.0,627.0 M2535.0,613.0 L2521.0,627.0" stroke="#666" stroke-width="2.1" stroke-linecap="round"/><path d="M2549.5,974.0 H2554.0 V969.0" fill="none" stroke="#5E5E5E" stroke-width="2"/><clipPath id="c1433_589"><rect x="1514" y="690" width="865" height="196"/></clipPath><rect x="1560" y="690" width="2" height="196" fill="#CDCDCD"/><rect x="1715" y="690" width="1" height="196" fill="#D4D4D4"/><rect x="1869" y="690" width="1" height="196" fill="#D4D4D4"/><rect x="2023" y="690" width="1" height="196" fill="#D4D4D4"/><rect x="2177" y="690" width="1" height="196" fill="#D4D4D4"/><rect x="2331" y="690" width="1" height="196" fill="#D4D4D4"/><rect x="1514" y="873" width="865" height="2" fill="#CDCDCD"/><rect x="1514" y="840" width="865" height="1" fill="#D4D4D4"/><rect x="1514" y="806" width="865" height="1" fill="#D4D4D4"/><rect x="1514" y="772" width="865" height="1" fill="#D4D4D4"/><rect x="1514" y="739" width="865" height="1" fill="#D4D4D4"/><rect x="1514" y="705" width="865" height="1" fill="#D4D4D4"/><g clip-path="url(#c1433_589)"><polyline points="1561.00,703.71 1599.52,703.71 1638.03,703.71 1676.55,703.71 1715.06,703.71 1753.58,703.71 1792.09,703.71 1830.61,703.71 1869.12,703.71 1907.63,703.71 1946.15,703.71 1984.66,703.71 2023.18,703.71 2061.70,703.71 2100.21,703.71 2138.72,703.71 2177.24,703.71 2215.76,703.71 2254.27,703.71 2292.78,703.71 2331.30,703.71" fill="none" stroke="#636EFA" stroke-width="2" stroke-linejoin="round"/><circle cx="1561.00" cy="703.71" r="3" fill="#636EFA"/><circle cx="1599.52" cy="703.71" r="3" fill="#636EFA"/><circle cx="1638.03" cy="703.71" r="3" fill="#636EFA"/><circle cx="1676.55" cy="703.71" r="3" fill="#636EFA"/><circle cx="1715.06" cy="703.71" r="3" fill="#636EFA"/><circle cx="1753.58" cy="703.71" r="3" fill="#636EFA"/><circle cx="1792.09" cy="703.71" r="3" fill="#636EFA"/><circle cx="1830.61" cy="703.71" r="3" fill="#636EFA"/><circle cx="1869.12" cy="703.71" r="3" fill="#636EFA"/><circle cx="1907.63" cy="703.71" r="3" fill="#636EFA"/><circle cx="1946.15" cy="703.71" r="3" fill="#636EFA"/><circle cx="1984.66" cy="703.71" r="3" fill="#636EFA"/><circle cx="2023.18" cy="703.71" r="3" fill="#636EFA"/><circle cx="2061.70" cy="703.71" r="3" fill="#636EFA"/><circle cx="2100.21" cy="703.71" r="3" fill="#636EFA"/><circle cx="2138.72" cy="703.71" r="3" fill="#636EFA"/><circle cx="2177.24" cy="703.71" r="3" fill="#636EFA"/><circle cx="2215.76" cy="703.71" r="3" fill="#636EFA"/><circle cx="2254.27" cy="703.71" r="3" fill="#636EFA"/><circle cx="2292.78" cy="703.71" r="3" fill="#636EFA"/><circle cx="2331.30" cy="703.71" r="3" fill="#636EFA"/><polyline points="1561.00,705.40 1599.52,705.40 1638.03,705.40 1676.55,705.40 1715.06,705.40 1753.58,705.40 1792.09,705.40 1830.61,705.40 1869.12,705.40 1907.63,705.40 1946.15,705.40 1984.66,705.40 2023.18,705.40 2061.70,705.40 2100.21,705.40 2138.72,705.40 2177.24,705.40 2215.76,705.40 2254.27,705.40 2292.78,705.40 2331.30,705.40" fill="none" stroke="#E8573D" stroke-width="2" stroke-linejoin="round"/><circle cx="1561.00" cy="705.40" r="3" fill="#E8573D"/><circle cx="1599.52" cy="705.40" r="3" fill="#E8573D"/><circle cx="1638.03" cy="705.40" r="3" fill="#E8573D"/><circle cx="1676.55" cy="705.40" r="3" fill="#E8573D"/><circle cx="1715.06" cy="705.40" r="3" fill="#E8573D"/><circle cx="1753.58" cy="705.40" r="3" fill="#E8573D"/><circle cx="1792.09" cy="705.40" r="3" fill="#E8573D"/><circle cx="1830.61" cy="705.40" r="3" fill="#E8573D"/><circle cx="1869.12" cy="705.40" r="3" fill="#E8573D"/><circle cx="1907.63" cy="705.40" r="3" fill="#E8573D"/><circle cx="1946.15" cy="705.40" r="3" fill="#E8573D"/><circle cx="1984.66" cy="705.40" r="3" fill="#E8573D"/><circle cx="2023.18" cy="705.40" r="3" fill="#E8573D"/><circle cx="2061.70" cy="705.40" r="3" fill="#E8573D"/><circle cx="2100.21" cy="705.40" r="3" fill="#E8573D"/><circle cx="2138.72" cy="705.40" r="3" fill="#E8573D"/><circle cx="2177.24" cy="705.40" r="3" fill="#E8573D"/><circle cx="2215.76" cy="705.40" r="3" fill="#E8573D"/><circle cx="2254.27" cy="705.40" r="3" fill="#E8573D"/><circle cx="2292.78" cy="705.40" r="3" fill="#E8573D"/><circle cx="2331.30" cy="705.40" r="3" fill="#E8573D"/><polyline points="1561.00,703.71 1599.52,703.71 1638.03,703.71 1676.55,703.71 1715.06,703.71 1753.58,703.71 1792.09,703.71 1830.61,703.71 1869.12,703.71 1907.63,703.71 1946.15,703.71 1984.66,703.71 2023.18,703.71 2061.70,703.71 2100.21,703.71 2138.72,703.71 2177.24,703.71 2215.76,703.71 2254.27,703.71 2292.78,703.71 2331.30,703.71" fill="none" stroke="#3FC796" stroke-width="2" stroke-linejoin="round"/><circle cx="1561.00" cy="703.71" r="3" fill="#3FC796"/><circle cx="1599.52" cy="703.71" r="3" fill="#3FC796"/><circle cx="1638.03" cy="703.71" r="3" fill="#3FC796"/><circle cx="1676.55" cy="703.71" r="3" fill="#3FC796"/><circle cx="1715.06" cy="703.71" r="3" fill="#3FC796"/><circle cx="1753.58" cy="703.71" r="3" fill="#3FC796"/><circle cx="1792.09" cy="703.71" r="3" fill="#3FC796"/><circle cx="1830.61" cy="703.71" r="3" fill="#3FC796"/><circle cx="1869.12" cy="703.71" r="3" fill="#3FC796"/><circle cx="1907.63" cy="703.71" r="3" fill="#3FC796"/><circle cx="1946.15" cy="703.71" r="3" fill="#3FC796"/><circle cx="1984.66" cy="703.71" r="3" fill="#3FC796"/><circle cx="2023.18" cy="703.71" r="3" fill="#3FC796"/><circle cx="2061.70" cy="703.71" r="3" fill="#3FC796"/><circle cx="2100.21" cy="703.71" r="3" fill="#3FC796"/><circle cx="2138.72" cy="703.71" r="3" fill="#3FC796"/><circle cx="2177.24" cy="703.71" r="3" fill="#3FC796"/><circle cx="2215.76" cy="703.71" r="3" fill="#3FC796"/><circle cx="2254.27" cy="703.71" r="3" fill="#3FC796"/><circle cx="2292.78" cy="703.71" r="3" fill="#3FC796"/><circle cx="2331.30" cy="703.71" r="3" fill="#3FC796"/><polyline points="1561.00,793.86 1599.52,794.20 1638.03,794.54 1676.55,793.36 1715.06,789.82 1753.58,783.58 1792.09,775.16 1830.61,766.23 1869.12,759.83 1907.63,757.80 1946.15,761.68 1984.66,770.95 2023.18,785.44 2061.70,801.78 2100.21,818.80 2138.72,834.30 2177.24,847.28 2215.76,858.06 2254.27,867.16 2292.78,872.38 2331.30,865.31" fill="none" stroke="#A963F8" stroke-width="2" stroke-linejoin="round"/><circle cx="1561.00" cy="793.86" r="3" fill="#A963F8"/><circle cx="1599.52" cy="794.20" r="3" fill="#A963F8"/><circle cx="1638.03" cy="794.54" r="3" fill="#A963F8"/><circle cx="1676.55" cy="793.36" r="3" fill="#A963F8"/><circle cx="1715.06" cy="789.82" r="3" fill="#A963F8"/><circle cx="1753.58" cy="783.58" r="3" fill="#A963F8"/><circle cx="1792.09" cy="775.16" r="3" fill="#A963F8"/><circle cx="1830.61" cy="766.23" r="3" fill="#A963F8"/><circle cx="1869.12" cy="759.83" r="3" fill="#A963F8"/><circle cx="1907.63" cy="757.80" r="3" fill="#A963F8"/><circle cx="1946.15" cy="761.68" r="3" fill="#A963F8"/><circle cx="1984.66" cy="770.95" r="3" fill="#A963F8"/><circle cx="2023.18" cy="785.44" r="3" fill="#A963F8"/><circle cx="2061.70" cy="801.78" r="3" fill="#A963F8"/><circle cx="2100.21" cy="818.80" r="3" fill="#A963F8"/><circle cx="2138.72" cy="834.30" r="3" fill="#A963F8"/><circle cx="2177.24" cy="847.28" r="3" fill="#A963F8"/><circle cx="2215.76" cy="858.06" r="3" fill="#A963F8"/><circle cx="2254.27" cy="867.16" r="3" fill="#A963F8"/><circle cx="2292.78" cy="872.38" r="3" fill="#A963F8"/><circle cx="2331.30" cy="865.31" r="3" fill="#A963F8"/></g><rect x="1513" y="689" width="867" height="1" fill="#000"/><rect x="1513" y="886" width="867" height="1" fill="#000"/><rect x="1513" y="689" width="1" height="198" fill="#000"/><rect x="2379" y="689" width="1" height="198" fill="#000"/><rect x="1560" y="887" width="1" height="5" fill="#444"/><text x="1561.50" y="910.60" font-size="16.70" fill="#2A3F5F" font-weight="normal" text-anchor="middle" >0</text><rect x="1715" y="887" width="1" height="5" fill="#444"/><text x="1715.56" y="910.60" font-size="16.70" fill="#2A3F5F" font-weight="normal" text-anchor="middle" >1</text><rect x="1869" y="887" width="1" height="5" fill="#444"/><text x="1869.62" y="910.60" font-size="16.70" fill="#2A3F5F" font-weight="normal" text-anchor="middle" >2</text><rect x="2023" y="887" width="1" height="5" fill="#444"/><text x="2023.68" y="910.60" font-size="16.70" fill="#2A3F5F" font-weight="normal" text-anchor="middle" >3</text><rect x="2177" y="887" width="1" height="5" fill="#444"/><text x="2177.74" y="910.60" font-size="16.70" fill="#2A3F5F" font-weight="normal" text-anchor="middle" >4</text><rect x="2331" y="887" width="1" height="5" fill="#444"/><text x="2331.80" y="910.60" font-size="16.70" fill="#2A3F5F" font-weight="normal" text-anchor="middle" >5</text><rect x="1508" y="873" width="5" height="1" fill="#444"/><text x="1504.80" y="879.70" font-size="16.70" fill="#2A3F5F" font-weight="normal" text-anchor="end" >0</text><rect x="1508" y="840" width="5" height="1" fill="#444"/><text x="1504.80" y="846.00" font-size="16.70" fill="#2A3F5F" font-weight="normal" text-anchor="end" >2</text><rect x="1508" y="806" width="5" height="1" fill="#444"/><text x="1504.80" y="812.30" font-size="16.70" fill="#2A3F5F" font-weight="normal" text-anchor="end" >4</text><rect x="1508" y="772" width="5" height="1" fill="#444"/><text x="1504.80" y="778.60" font-size="16.70" fill="#2A3F5F" font-weight="normal" text-anchor="end" >6</text><rect x="1508" y="739" width="5" height="1" fill="#444"/><text x="1504.80" y="744.90" font-size="16.70" fill="#2A3F5F" font-weight="normal" text-anchor="end" >8</text><rect x="1508" y="705" width="5" height="1" fill="#444"/><text x="1504.80" y="711.20" font-size="16.70" fill="#2A3F5F" font-weight="normal" text-anchor="end" textLength="19.9" lengthAdjust="spacingAndGlyphs" >10</text><text x="1946.50" y="938.80" font-size="14.50" fill="#2A3F5F" font-weight="normal" text-anchor="middle" textLength="51.5" lengthAdjust="spacingAndGlyphs" >Time, s</text><text x="0" y="0" font-size="14.5" fill="#2A3F5F" text-anchor="middle" textLength="70.0" lengthAdjust="spacingAndGlyphs" transform="translate(1465.2,788.0) rotate(-90)">Voltage, V</text><rect x="2401.2" y="703.40" width="30.3" height="2" fill="#636EFA"/><circle cx="2416.2" cy="704.40" r="3" fill="#636EFA"/><text x="2436.30" y="708.90" font-size="13.00" fill="#2A3F5F" font-weight="normal" text-anchor="start" textLength="101.6" lengthAdjust="spacingAndGlyphs" >Transmitter Coil1</text><rect x="2401.2" y="722.40" width="30.3" height="2" fill="#E8573D"/><circle cx="2416.2" cy="723.40" r="3" fill="#E8573D"/><text x="2436.30" y="727.90" font-size="13.00" fill="#2A3F5F" font-weight="normal" text-anchor="start" textLength="102.0" lengthAdjust="spacingAndGlyphs" >Transmitter Coil2</text><rect x="2401.2" y="741.40" width="30.3" height="2" fill="#3FC796"/><circle cx="2416.2" cy="742.40" r="3" fill="#3FC796"/><text x="2436.30" y="746.90" font-size="13.00" fill="#2A3F5F" font-weight="normal" text-anchor="start" textLength="102.0" lengthAdjust="spacingAndGlyphs" >Transmitter Coil3</text><rect x="2401.2" y="760.40" width="30.3" height="2" fill="#A963F8"/><circle cx="2416.2" cy="761.40" r="3" fill="#A963F8"/><text x="2436.30" y="765.90" font-size="13.00" fill="#2A3F5F" font-weight="normal" text-anchor="start" textLength="83.4" lengthAdjust="spacingAndGlyphs" >Receiver Coil1</text><rect x="0" y="1338" width="2557" height="27" fill="#E3DFDC"/><path d="M17.03,1348.2 A7.2,7.2 0 1 0 17.03,1359.2" fill="none" stroke="#111" stroke-width="3.6"/><circle cx="26.6" cy="1350.2" r="1.8" fill="#111"/><circle cx="26.6" cy="1358.4" r="1.8" fill="#111"/><text x="44.40" y="1358.80" font-size="14.50" fill="#222" font-weight="normal" text-anchor="start" textLength="138.2" lengthAdjust="spacingAndGlyphs" >Connected to the kernel</text><rect x="2466" y="1340" width="91" height="25" fill="#0D0D24"/><rect x="2466" y="1340" width="91" height="1" fill="#4A4A5A"/><text x="2468" y="1346.5" font-family="'Liberation Mono', monospace" font-size="5.6" fill="#E8E8F0" textLength="88" lengthAdjust="spacingAndGlyphs">CENOS Wireless Charging v2.6.</text><text x="2468" y="1352.5" font-family="'Liberation Mono', monospace" font-size="5.6" fill="#E8E8F0" textLength="88" lengthAdjust="spacingAndGlyphs">System: Windows 11 Pro (10.0.</text><text x="2468" y="1358.5" font-family="'Liberation Mono', monospace" font-size="5.6" fill="#E8E8F0" textLength="88" lengthAdjust="spacingAndGlyphs">Starting to read config yaml</text><text x="2468" y="1364.5" font-family="'Liberation Mono', monospace" font-size="5.6" fill="#E8E8F0" textLength="88" lengthAdjust="spacingAndGlyphs">Loading case from D:\WCID.0 d</text><g filter="url(#fabsh)"><circle cx="2482" cy="1292" r="28" fill="#E68A35"/></g><path d="M2482.6,1301.9 A10.6,10.6 0 1 1 2491.2,1297.6 L2482.5,1306.9 L2482.5,1301.8" fill="none" stroke="#fff" stroke-width="2.2" stroke-linejoin="miter"/><path d="M2478.6,1288.6 A3.9,3.9 0 1 1 2484.7,1291.8 Q2482.5,1293.0 2482.5,1294.9 L2482.5,1295.4" fill="none" stroke="#fff" stroke-width="2.5"/><rect x="2481.1" y="1297.0" width="2.9" height="2.5" fill="#fff"/></svg>
</body></html>
